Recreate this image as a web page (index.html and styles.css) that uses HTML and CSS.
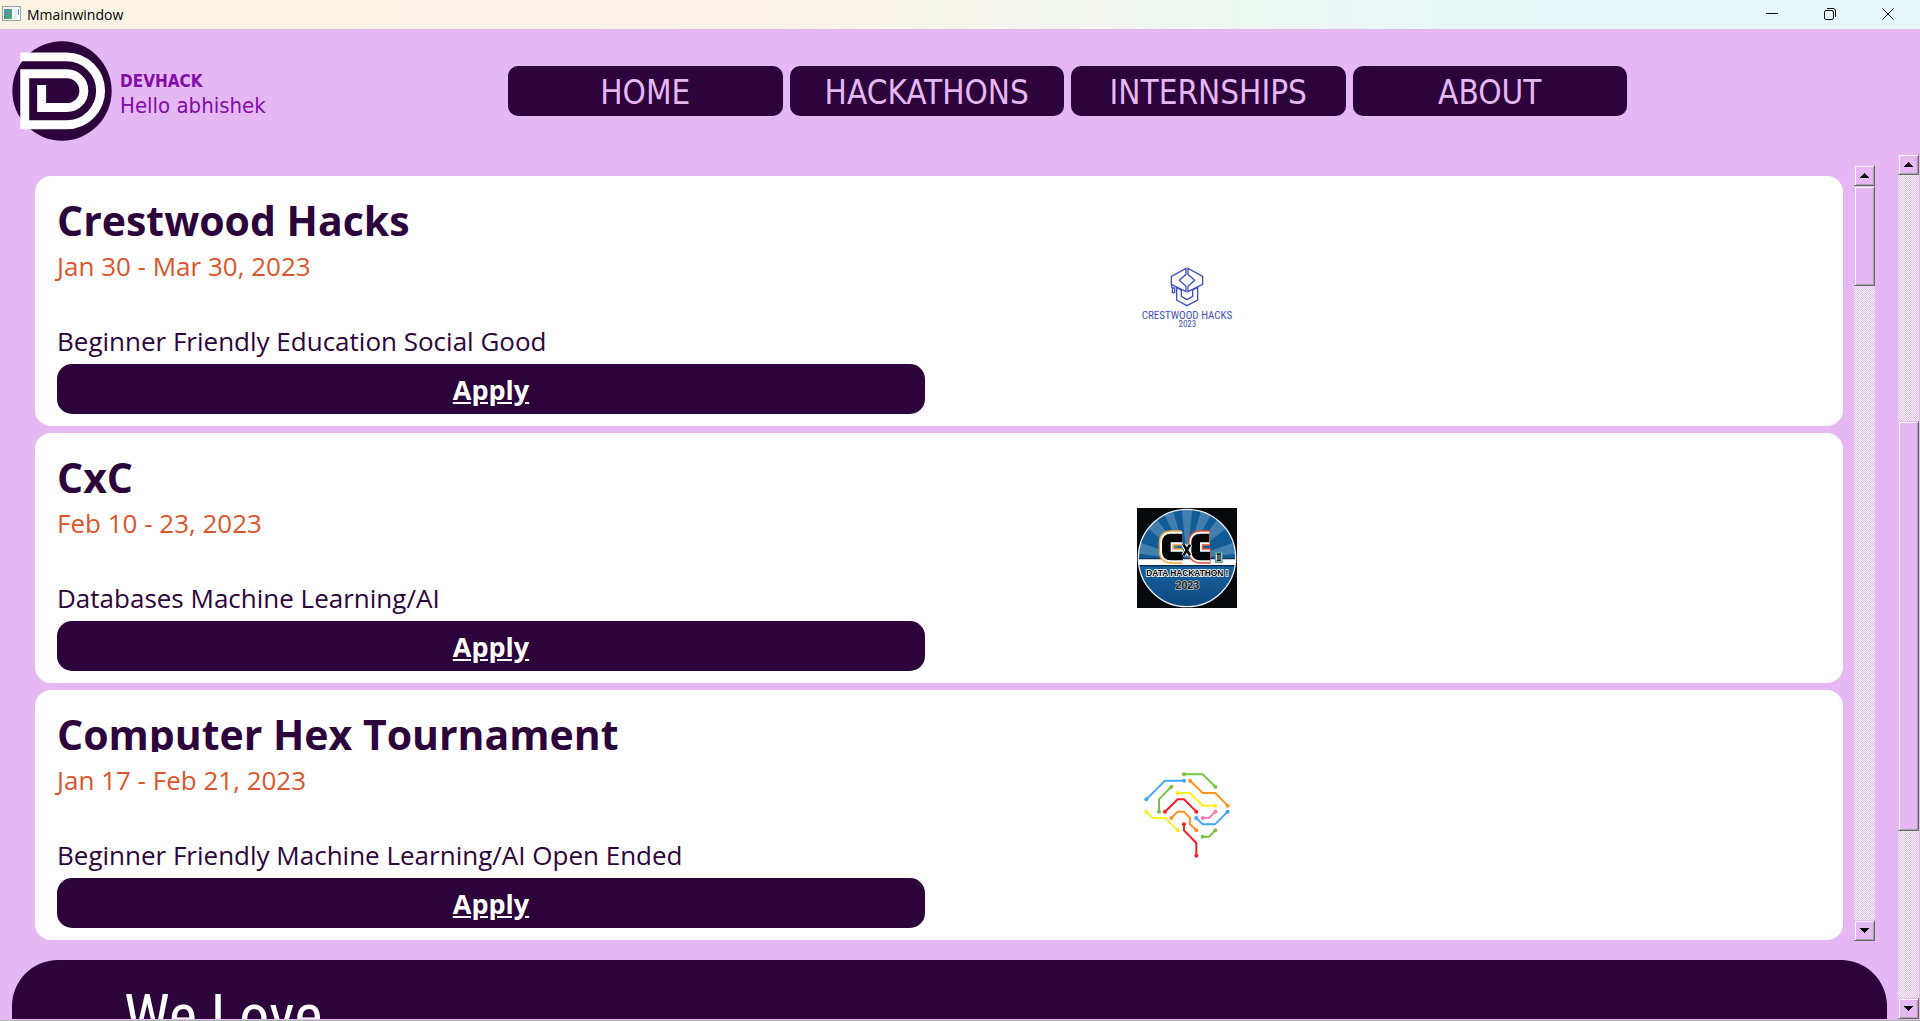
FILE: index.html
```html
<!DOCTYPE html>
<html lang="en">
<head>
<meta charset="utf-8">
<meta name="viewport" content="width=device-width, initial-scale=1">
<title>Mmainwindow</title>
<link rel="stylesheet" href="styles.css">
</head>
<body>
<div class="window">
  <div class="titlebar">
    <svg class="titlebar-icon" viewBox="0 0 19 16" aria-hidden="true">
      <defs><linearGradient id="pane" x1="0" y1="0" x2="1" y2="1"><stop offset="0" stop-color="#4a8fa8"/><stop offset="1" stop-color="#55a878"/></linearGradient></defs>
      <rect x=".5" y=".5" width="18" height="14" fill="#f4f8fa" stroke="#98a4a8"/>
      <rect x="2" y="3" width="8" height="10" fill="url(#pane)"/>
      <rect x="12" y="3" width="3" height="10" fill="#e4ecef"/>
      <rect x="16" y="3" width="1" height="6" fill="#4a9cb0"/>
    </svg>
    <span class="titlebar-name">Mmainwindow</span>
    <button class="win-btn" aria-label="Minimize"><svg viewBox="0 0 14 14"><path d="M1 6.500H13"/></svg></button>
    <button class="win-btn" aria-label="Restore"><svg viewBox="0 0 14 14"><rect x="1.500" y="3.500" width="9" height="9" rx="1.500"/><path d="M4 1.500H10Q12.500 1.500 12.500 4V10"/></svg></button>
    <button class="win-btn" aria-label="Close"><svg viewBox="0 0 14 14"><path d="M1.500 1.500L12.500 12.500M12.500 1.500L1.500 12.500"/></svg></button>
  </div>

  <header class="header">
    <div class="brand">
      <svg class="logo" viewBox="35 122 302 302" aria-hidden="true">
        <circle cx="186" cy="273" r="150" fill="#2d033b"/>
        <path d="M60 170H200A102.500 102.500 0 0 1 200 375H73.500V221H201A51 51 0 0 1 201 323H124.500V255" fill="none" stroke="#fff" stroke-width="27"/>
      </svg>
      <div class="brand-text">
        <p class="brand-name">DEVHACK</p>
        <p class="greeting">Hello abhishek</p>
      </div>
    </div>
    <nav class="nav">
      <button class="nav-btn">HOME</button>
      <button class="nav-btn">HACKATHONS</button>
      <button class="nav-btn">INTERNSHIPS</button>
      <button class="nav-btn">ABOUT</button>
    </nav>
  </header>

  <div class="viewport">
    <main class="content">
      <section class="list">
        <div class="cards">
          <article class="card">
            <div class="card-info">
              <h2 class="card-title">Crestwood Hacks</h2>
              <p class="card-date">Jan 30 - Mar 30, 2023</p>
              <p class="card-tags">Beginner Friendly Education Social Good</p>
              <a class="apply" href="#">Apply</a>
            </div>
            <svg class="card-logo" viewBox="51 3 300 300" role="img" aria-label="Crestwood Hacks logo">
              <g fill="none" stroke="#4350b8" stroke-width="4">
                <path d="M198 55L154 79V103L198 125V109L178 91L198 73Z"/>
                <path d="M204 55L248 79V103L204 125V109L224 91L204 73Z"/>
                <path d="M170 113V150L201 167L233 150V113L218 120V139L201 149L184 139V120Z"/>
                <path d="M155 103V113M157 114H164V128H157Z"/>
              </g>
              <text class="crest-name" x="201" y="206" text-anchor="middle">CRESTWOOD HACKS</text>
              <text class="crest-year" x="202" y="231" text-anchor="middle">2023</text>
            </svg>
          </article>

          <article class="card">
            <div class="card-info">
              <h2 class="card-title">CxC</h2>
              <p class="card-date">Feb 10 - 23, 2023</p>
              <p class="card-tags">Databases Machine Learning/AI</p>
              <a class="apply" href="#">Apply</a>
            </div>
            <svg class="card-logo" viewBox="51 54 300 300" role="img" aria-label="CxC logo">
              <defs>
                <clipPath id="disc"><circle cx="201" cy="204" r="145"/></clipPath>
                <linearGradient id="sea" x1="0" y1="0" x2="0" y2="1"><stop offset="0" stop-color="#1763a0"/><stop offset="1" stop-color="#0d477e"/></linearGradient>
              </defs>
              <rect x="51" y="54" width="300" height="300" fill="#07090d"/>
              <g clip-path="url(#disc)">
                <rect x="51" y="54" width="300" height="300" fill="#115b97"/>
                <path fill="#427fae" d="M201 208L40 190V150ZM201 208L50 90L85 55ZM201 208L115 40L150 30ZM201 208L182 30H220ZM201 208L252 30L290 42ZM201 208L318 55L350 90ZM201 208L362 150V190Z"/>
                <rect x="51" y="226" width="300" height="130" fill="url(#sea)"/>
                <path fill="#07264a" d="M51 205H351V229H51Z"/>
                <path fill="#fff" d="M51 208H351V225H51Z"/>
              </g>
              <circle cx="201" cy="204" r="146" fill="none" stroke="#e8eef2" stroke-width="4"/>
              <g fill="none" stroke-linejoin="round">
                <path d="M185 144H152Q139 144 139 157V185Q139 198 152 198H187" stroke="#f0a43a" stroke-width="46"/>
                <path d="M270 144H240Q227 144 227 157V185Q227 198 240 198H272" stroke="#df502f" stroke-width="46"/>
                <path d="M187 144H152Q139 144 139 157V185Q139 198 152 198H189M268 144H240Q227 144 227 157V185Q227 198 240 198H270" stroke="#fff" stroke-width="37"/>
                <path d="M187 144H152Q139 144 139 157V185Q139 198 152 198H189M268 144H240Q227 144 227 157V185Q227 198 240 198H270" stroke="#050608" stroke-width="26"/>
                <path d="M191 164L210 196M210 164L191 196" stroke="#fff" stroke-width="14"/>
                <path d="M191 164L210 196M210 164L191 196" stroke="#050608" stroke-width="8"/>
              </g>
              <rect x="285" y="185" width="23" height="34" fill="#4aa7a0"/>
              <rect x="289" y="189" width="15" height="26" fill="#fff"/>
              <path d="M290 192H303M290 212H303M294 192V212M300 192V212" stroke="#111" stroke-width="4"/>
              <text class="cxc-name" x="202" y="257" text-anchor="middle">DATA HACKATHON !</text>
              <text class="cxc-year" x="202" y="298" text-anchor="middle">2023</text>
            </svg>
          </article>

          <article class="card">
            <div class="card-info">
              <h2 class="card-title">Computer Hex Tournament</h2>
              <p class="card-date">Jan 17 - Feb 21, 2023</p>
              <p class="card-tags">Beginner Friendly Machine Learning/AI Open Ended</p>
              <a class="apply" href="#">Apply</a>
            </div>
            <svg class="card-logo" viewBox="51 45 300 300" role="img" aria-label="Computer Hex Tournament logo">
              <g fill="none" stroke-width="6">
                <path stroke="#42a5f5" d="M79 148L135 92H192M229 204L248 223H285L323 185"/>
                <path stroke="#76c442" d="M192 73H248L286 110M154 110L117 148V185M248 260H267L286 241"/>
                <path stroke="#ff9322" d="M210 92L248 129H286L323 167M154 204L173 185H192L210 204V223L229 241"/>
                <path stroke="#fcee21" d="M173 129H210L248 167H286M79 185L98 204H136L173 241"/>
                <path stroke="#ff1d25" d="M135 185L173 148H192L229 185M192 223V241L229 279V317"/>
                <path stroke="#ff7bac" d="M248 204H267L286 185"/>
              </g>
              <g fill="#42a5f5"><circle cx="79" cy="148" r="6"/><circle cx="192" cy="92" r="6"/><circle cx="229" cy="204" r="6"/><circle cx="323" cy="185" r="6"/></g>
              <g fill="#76c442"><circle cx="192" cy="73" r="6"/><circle cx="286" cy="110" r="6"/><circle cx="154" cy="110" r="6"/><circle cx="117" cy="185" r="6"/><circle cx="248" cy="260" r="6"/><circle cx="286" cy="241" r="6"/></g>
              <g fill="#ff9322"><circle cx="210" cy="92" r="6"/><circle cx="323" cy="167" r="6"/><circle cx="154" cy="204" r="6"/><circle cx="229" cy="241" r="6"/></g>
              <g fill="#fcee21"><circle cx="173" cy="129" r="6"/><circle cx="286" cy="167" r="6"/><circle cx="79" cy="185" r="6"/><circle cx="173" cy="241" r="6"/></g>
              <g fill="#ff1d25"><circle cx="135" cy="185" r="6"/><circle cx="229" cy="185" r="6"/><circle cx="192" cy="223" r="6"/><circle cx="229" cy="317" r="6"/></g>
              <g fill="#ff7bac"><circle cx="248" cy="204" r="6"/><circle cx="286" cy="185" r="6"/></g>
            </svg>
          </article>
        </div>
        <div class="scrollbar">
          <button class="scroll-btn" aria-label="Scroll list up"><svg viewBox="0 0 9 5"><path d="M4 0H5V1H6V2H7V3H8V4H9V5H0V4H1V3H2V2H3V1H4Z"/></svg></button>
          <div class="track track-list"><div class="thumb"></div></div>
          <button class="scroll-btn" aria-label="Scroll list down"><svg viewBox="0 0 9 5"><path d="M0 0H9V1H8V2H7V3H6V4H5V5H4V4H3V3H2V2H1V1H0Z"/></svg></button>
        </div>
      </section>
      <section class="about">
        <p class="about-text">We Love</p>
      </section>
    </main>
    <div class="scrollbar">
      <button class="scroll-btn" aria-label="Scroll page up"><svg viewBox="0 0 9 5"><path d="M4 0H5V1H6V2H7V3H8V4H9V5H0V4H1V3H2V2H3V1H4Z"/></svg></button>
      <div class="track track-page"><div class="thumb"></div></div>
      <button class="scroll-btn" aria-label="Scroll page down"><svg viewBox="0 0 9 5"><path d="M0 0H9V1H8V2H7V3H6V4H5V5H4V4H3V3H2V2H1V1H0Z"/></svg></button>
    </div>
  </div>
</div>
</body>
</html>
```

FILE: styles.css
```css
:root {
  --lilac: #e5b8f4;
  --plum: #2d033b;
  --violet: #810ca8;
  --orange: #d9552b;
}

* { box-sizing: border-box; }

body, h2, p { margin: 0; }

button { font: inherit; border: 0; padding: 0; }

body {
  font-family: "Open Sans", "Noto Sans", sans-serif;
  color: var(--plum);
  background: var(--lilac);
}

.window {
  display: flex;
  flex-direction: column;
  height: 100vh;
  overflow: hidden;
  border-bottom: 1px solid #adb3b0;
}

/* Title bar */
.titlebar {
  flex: none;
  display: flex;
  align-items: center;
  height: 29px;
  padding: 0 3px 1px 2px;
  background: linear-gradient(90deg, #faf3e2 0%, #faf2e6 40%, #e6f8f6 75%, #e5f7f6 100%);
  color: #000;
  font-size: 14px;
}

.titlebar-icon { width: 19px; height: 16px; margin-right: 6px; }

.titlebar-name { flex: 1; }

.win-btn {
  display: grid;
  place-items: center;
  width: 58px;
  height: 28px;
  background: none;
}

.win-btn svg { width: 14px; height: 14px; fill: none; stroke: #111; stroke-width: 1; }

/* Header */
.header {
  flex: none;
  display: grid;
  grid-template-columns: 496fr 1119fr 293fr;
  align-items: center;
  height: 125px;
  padding: 0 0 2px 12px;
  font-family: "DejaVu Sans Condensed", "DejaVu Sans", sans-serif;
}

.brand { display: flex; align-items: center; gap: 8px; color: var(--violet); }

.logo { width: 100px; height: 100px; }

.brand-text { padding-top: 8px; }

.brand-name { font-size: 17px; line-height: 22px; font-weight: bold; }

.greeting { font-size: 22px; line-height: 28px; }

.nav { display: grid; grid-template-columns: repeat(4, 1fr); gap: 7px; }

.nav-btn {
  height: 50px;
  padding-top: 4px;
  border-radius: 10px;
  background: var(--plum);
  color: var(--lilac);
  font-size: 33px;
}

/* Scrolled page */
.viewport {
  flex: 1;
  display: flex;
  min-height: 0;
  padding: 0 1px 1px 0;
}

.content { flex: 1; min-width: 0; padding: 11px 11px 0 12px; overflow: hidden; }

.list { display: flex; gap: 11px; padding: 0 12px 0 23px; }

.cards {
  flex: 1;
  display: flex;
  flex-direction: column;
  gap: 7px;
  padding: 11px 0 1px;
}

.card {
  display: grid;
  grid-template-columns: 868fr 524fr 372fr;
  min-height: 250px;
  padding: 22px 22px 12px;
  border-radius: 16px;
  background: #fff;
}

.card-info { display: flex; flex-direction: column; }

.card-title { height: 40px; overflow: hidden; font-size: 41px; line-height: 44px; }

.card-date { margin-top: 10px; font-size: 26px; line-height: 36px; color: var(--orange); }

.card-tags { margin-top: auto; margin-bottom: 5px; font-size: 26px; line-height: 36px; }

.apply {
  height: 50px;
  border-radius: 15px;
  background: var(--plum);
  color: #fff;
  font-size: 27px;
  line-height: 52px;
  font-weight: bold;
  text-align: center;
}

.card-logo { align-self: center; justify-self: center; width: 100px; height: 100px; margin-bottom: 10px; }

.crest-name { font: 33px "Liberation Sans Narrow", "Roboto Condensed", sans-serif; fill: #4350b8; }
.crest-year { font: 27px "Liberation Sans Narrow", "Roboto Condensed", sans-serif; fill: #4350b8; }
.cxc-name { font: bold 25px "Liberation Sans", sans-serif; fill: #000; stroke: #fff; stroke-width: 5px; paint-order: stroke; }
.cxc-year { font: bold 32px "Liberation Sans", sans-serif; fill: #222; stroke: #b9c6d0; stroke-width: 4px; paint-order: stroke; }

.about {
  margin-top: 19px;
  padding: 20px 112px 60px;
  border-radius: 46px;
  background: var(--plum);
  color: #fff;
}

.about-text { font: 60px/72px "Liberation Sans Narrow", "Roboto Condensed", sans-serif; }

/* Classic bevelled scroll bars */
.scrollbar { flex: none; display: flex; flex-direction: column; width: 21px; }

.scroll-btn, .thumb {
  border: 1px solid;
  border-color: var(--lilac) #696969 #696969 var(--lilac);
  background: var(--lilac);
  box-shadow: inset 1px 1px #fff, inset -1px -1px #a0a0a0;
}

.scroll-btn { flex: none; display: grid; place-items: center; height: 21px; }

.scroll-btn svg { width: 9px; height: 5px; }

.track {
  flex: 1;
  display: grid;
  background: repeating-conic-gradient(#fff 0 25%, var(--lilac) 0 50%) 0 0 / 2px 2px;
}

.track-list { grid-template-rows: 100fr 634fr; }

.track-page { grid-template-rows: 246fr 410fr 167fr; }

.track-page .thumb { grid-row: 2; }
```
